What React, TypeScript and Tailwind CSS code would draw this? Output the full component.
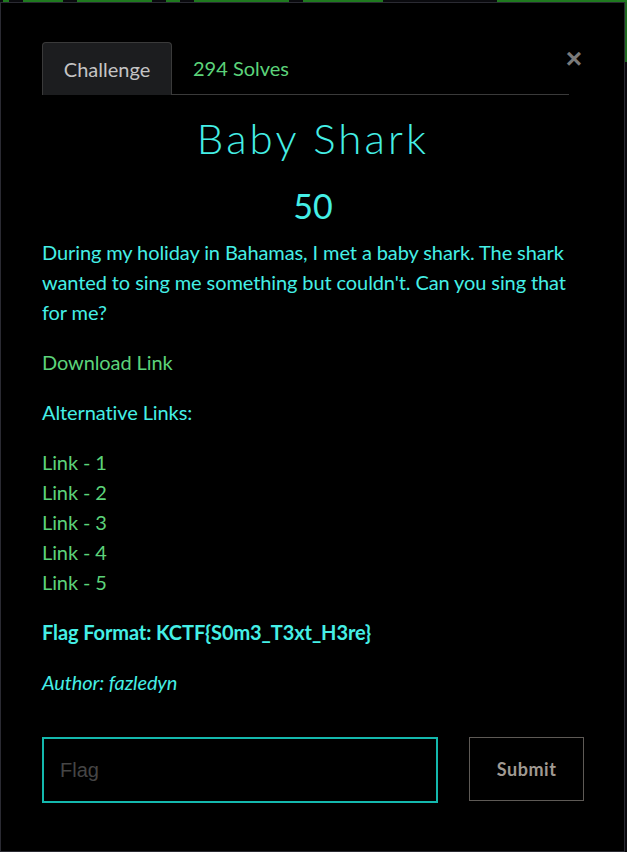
const links = ["Link - 1", "Link - 2", "Link - 3", "Link - 4", "Link - 5"]

export default function App() {
    return (
        <div className="relative h-[852px] w-[627px] overflow-hidden bg-[#0a0a0e]" style={{ fontFamily: "Lato, 'Open Sans', sans-serif" }}>
            {/* bits of the page behind the modal */}
            <div className="flex h-[2px] gap-[14px] pl-[3px]">
                <div className="w-[6px] bg-[#1f7a1f]" />
                <div className="w-[40px] bg-[#1f7a1f]" />
                <div className="w-[75px] bg-[#1f7a1f]" />
                <div className="w-[14px] bg-[#1f7a1f]" />
                <div className="w-[95px] bg-[#1f7a1f]" />
                <div className="w-[80px] bg-[#1f7a1f]" />
                <div className="ml-auto w-[130px] bg-[#1f7a1f]" />
            </div>
            <div className="absolute right-0 top-[2px] h-[60px] w-[2px] bg-[#1f6a1f]" />

            <div className="mr-[2px] h-[850px] border border-[#2a2a32] bg-black pl-[41px] pr-[40px] pt-[39px]">
                <div className="relative">
                    <div className="mr-[15px] flex border-b border-[#3a3a3a]">
                        <div className="-mb-px flex h-[53px] w-[130px] items-center justify-center rounded-t-[4px] border border-b-0 border-[#3a3a3a] bg-[#1c1d1f] text-[20px] text-[#c4c4c4]">
                            Challenge
                        </div>
                        <div className="flex h-[52px] items-center px-[21px] text-[20px] text-[#5cd37a]">294 Solves</div>
                    </div>
                    <div className="absolute right-[2px] top-[2px] text-[28px] font-bold leading-[30px] text-[#7a7a7a]" style={{ fontFamily: "'Liberation Sans', Arial, sans-serif" }}>
                        ×
                    </div>
                </div>

                <h1 className="mt-[19px] text-center text-[42px] font-light leading-[48px] tracking-[0.075em] text-[#45efe6]">Baby Shark</h1>
                <h2 className="mt-[24px] text-center text-[34px] leading-[40px] text-[#45efe6]">50</h2>

                <div className="mt-[11px] text-[20px] leading-[30px] tracking-[-0.005em] text-[#45efe6]">
                    <p className="mb-[20px]">
                        During my holiday in Bahamas, I met a baby shark. The shark wanted to sing me something but couldn't. Can you sing that for me?
                    </p>
                    <p className="mb-[20px] text-[#5cd37a]">Download Link</p>
                    <p className="mb-[20px]">Alternative Links:</p>
                    <div className="mb-[20px] flex flex-col text-[#5cd37a]">
                        {links.map((l) => (
                            <span key={l}>{l}</span>
                        ))}
                    </div>
                    <p className="mb-[20px] font-bold">Flag Format: KCTF{"{"}S0m3_T3xt_H3re{"}"}</p>
                    <p className="italic">Author: fazledyn</p>
                </div>

                <div className="mt-[40px] flex items-start gap-[31px]">
                    <input
                        placeholder="Flag"
                        className="h-[66px] w-[397px] border-2 border-[#14b8ad] bg-black px-[16px] text-[20px] text-[#ccc] outline-none placeholder:text-[#454545]"
                        style={{ fontFamily: "'Liberation Sans', Arial, sans-serif" }}
                    />
                    <button className="h-[64px] w-[115px] border border-[#5e5a56] bg-black text-[18px] font-bold tracking-[0.03em] text-[#a09a92]">
                        Submit
                    </button>
                </div>
            </div>
        </div>
    )
}
